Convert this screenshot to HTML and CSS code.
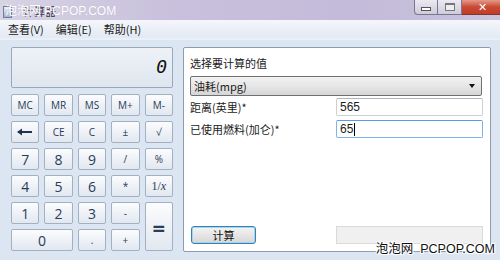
FILE: index.html
```html
<!DOCTYPE html>
<html lang="zh-CN">

<head>
  <meta charset="UTF-8">
  <title>计算器</title>
  <link rel="stylesheet" href="styles.css">
</head>

<body>
  <div class="window">
    <div class="titlebar">
      <span class="app-icon"></span>
      <span class="title">计算器</span>
      <div class="win-controls">
        <span class="win-btn win-min"><i></i></span>
        <span class="win-btn win-max"><i></i></span>
        <span class="win-btn win-close">✕</span>
      </div>
      <span class="mark mark--top">泡泡网 PCPOP.COM</span>
    </div>

    <div class="menubar">
      <span>查看(V)</span>
      <span>编辑(E)</span>
      <span>帮助(H)</span>
    </div>

    <div class="main">
      <div class="calc">
        <div class="display">0</div>
        <div class="keys">
          <button>MC</button>
          <button>MR</button>
          <button>MS</button>
          <button>M+</button>
          <button>M-</button>

          <button class="key-back">
            <svg width="16" height="8" viewBox="0 0 16 8">
              <path d="M1 4H15" stroke="#1f3350" stroke-width="2"/>
              <path d="M0 4L5 0.5V7.5Z" fill="#1f3350"/>
            </svg>
          </button>
          <button class="key-sm">CE</button>
          <button class="key-sm">C</button>
          <button class="key-sm">±</button>
          <button class="key-sm">√</button>

          <button class="key-num">7</button>
          <button class="key-num">8</button>
          <button class="key-num">9</button>
          <button class="key-sm">/</button>
          <button class="key-sm">%</button>

          <button class="key-num">4</button>
          <button class="key-num">5</button>
          <button class="key-num">6</button>
          <button class="key-sm">*</button>
          <button class="key-recip">1/<em>x</em></button>

          <button class="key-num">1</button>
          <button class="key-num">2</button>
          <button class="key-num">3</button>
          <button class="key-sm">-</button>
          <button class="key-eq">=</button>

          <button class="key-num key-zero">0</button>
          <button class="key-sm">.</button>
          <button class="key-sm">+</button>
        </div>
      </div>

      <div class="panel">
        <div class="panel__label">选择要计算的值</div>
        <div class="select">
          <span>油耗(mpg)</span>
          <span class="select__arrow"></span>
        </div>
        <div class="fields">
          <label>距离(英里)*</label>
          <div class="field">565</div>
          <label>已使用燃料(加仑)*</label>
          <div class="field field--focus">65<span class="caret"></span></div>
        </div>
        <div class="panel__foot">
          <button class="btn-calc">计算</button>
          <div class="result"></div>
        </div>
      </div>
    </div>

    <span class="mark mark--bottom">泡泡网&nbsp; PCPOP.COM</span>
  </div>
</body>

</html>
```

FILE: styles.css
```css
html,
body {
  margin: 0;
  height: 100%;
}

body {
  width: 500px;
  height: 260px;
  overflow: hidden;
  font-family: "Noto Sans CJK SC", "Liberation Sans", sans-serif;
  font-size: 11px;
  color: #1b1b1b;
}

.window {
  position: relative;
  height: 260px;
  background: #dce6f3;
}

/* 标题栏 */
.titlebar {
  position: relative;
  display: flex;
  align-items: center;
  height: 20px;
  background: linear-gradient(to right, #d7d3e3, #c8c0dc 35%, #c3bbd9 70%, #c9c3dc);
}

.app-icon {
  width: 7px;
  height: 10px;
  margin: 3px 0 0 3px;
  background: linear-gradient(#eef2f8, #9fb3cf);
  border: 1px solid #6d7f9c;
}

.title {
  margin: 2px 0 0 11px;
  font-size: 11px;
  color: #3a3848;
}

.win-controls {
  display: flex;
  align-self: flex-start;
  margin-left: auto;
  margin-right: -4px;
}

.win-btn {
  display: flex;
  align-items: center;
  justify-content: center;
  height: 14px;
  border: 1px solid #7a7690;
  border-top: none;
  background: linear-gradient(#ebe9f1, #cfcbdc);
}

.win-min {
  width: 22px;
  border-bottom-left-radius: 4px;
}

.win-min i {
  width: 8px;
  height: 2px;
  margin-top: 4px;
  background: #fff;
  border: 1px solid #555;
}

.win-max {
  width: 23px;
  border-left: none;
}

.win-max i {
  width: 8px;
  height: 5px;
  border: 1px solid #777;
  border-top-width: 2px;
  background: #eee;
}

.win-close {
  width: 41px;
  border-left: none;
  border-color: #7a3a33;
  border-bottom-right-radius: 4px;
  background: linear-gradient(#e49a8a, #c94a35 50%, #c23b24);
  color: #fff;
  font-weight: bold;
  font-size: 11px;
  font-family: "DejaVu Sans", sans-serif;
}

/* 水印 */
.mark {
  position: absolute;
  font-family: "Liberation Sans", "Noto Sans CJK SC", sans-serif;
  font-size: 12px;
  line-height: 14px;
  white-space: nowrap;
}

.mark--top {
  left: 5px;
  top: 4px;
  color: #fff;
  text-shadow: 0 0 1px #b8b0cc;
}

.mark--bottom {
  right: 5px;
  bottom: 4px;
  font-size: 12.5px;
  color: #111;
  text-shadow: 1px 1px 0 #fff, -1px -1px 0 #fff, 1px -1px 0 #fff, -1px 1px 0 #fff;
}

/* 菜单栏 */
.menubar {
  display: flex;
  gap: 12px;
  height: 18px;
  padding-left: 8px;
  align-items: center;
  background: linear-gradient(#f4f6fa, #e3e9f3);
  border-bottom: 2px solid #eaf0f8;
  color: #1a1a1a;
}

/* 主体 */
.main {
  display: flex;
  gap: 10px;
  padding: 7px 0 0 11px;
}

.calc {
  width: 162px;
}

.display {
  height: 39px;
  border: 1px solid #9aa8bb;
  border-radius: 2px;
  background: linear-gradient(#eef2f7, #dfe6ef);
  text-align: right;
  padding-right: 5px;
  font-family: "DejaVu Sans Mono", monospace;
  font-style: italic;
  font-size: 18px;
  line-height: 38px;
  color: #111;
}

.keys {
  display: grid;
  grid-template-columns: repeat(5, 1fr);
  grid-auto-rows: 22px;
  gap: 5px 5px;
  margin-top: 6px;
}

.keys button {
  display: flex;
  align-items: center;
  justify-content: center;
  padding: 0;
  border: 1px solid #a3b0c2;
  border-radius: 2px;
  background: linear-gradient(#fbfcfd, #eef2f7 50%, #e2e8f0);
  font-family: "Open Sans", "Liberation Sans", sans-serif;
  font-size: 10px;
  color: #2a3c58;
}

.keys .key-num {
  font-size: 14px;
}

.keys .key-recip {
  font-family: "Liberation Serif", serif;
  font-size: 12px;
}

.keys .key-zero {
  grid-column: span 2;
}

.keys .key-eq {
  grid-row: span 2;
  font-size: 22px;
  font-weight: bold;
}

/* 右侧面板 */
.panel {
  display: flex;
  flex-direction: column;
  width: 300px;
  height: 189px;
  padding: 7px 0 7px 6px;
  background: #fff;
  border: 1px solid #8f9bae;
  border-radius: 2px;
}

.panel__label {
  line-height: 14px;
  margin-top: 1px;
}

.select {
  display: flex;
  align-items: center;
  width: 287px;
  height: 18px;
  margin-top: 6px;
  padding-left: 3px;
  border: 1px solid #707070;
  border-radius: 2px;
  background: linear-gradient(#f3f3f3, #e6e6e6 50%, #d6d6d6);
}

.select__arrow {
  margin-left: auto;
  margin-right: 6px;
  border: 3px solid transparent;
  border-top: 4px solid #111;
  border-bottom: 0;
}

.fields {
  display: grid;
  grid-template-columns: 146px 147px;
  grid-auto-rows: 18px;
  row-gap: 4px;
  margin-top: 2px;
  align-items: center;
}

.field {
  display: flex;
  align-items: center;
  height: 16px;
  padding-left: 3px;
  border: 1px solid #cbd0d8;
  border-top-color: #aeb4bd;
  border-radius: 2px;
  font-family: "Liberation Sans", sans-serif;
  font-size: 12px;
}

.field--focus {
  border-color: #7eb4ea;
  border-top-color: #569de5;
}

.caret {
  width: 1px;
  height: 13px;
  margin-left: 1px;
  background: #000;
}

.panel__foot {
  display: flex;
  justify-content: space-between;
  margin-top: auto;
  padding-right: 7px;
}

.btn-calc {
  width: 65px;
  height: 18px;
  margin-left: 1px;
  padding: 0;
  border: 1px solid #3c7fb1;
  border-radius: 3px;
  box-shadow: inset 0 0 0 1px #9fd6f0;
  background: linear-gradient(#f4f4f4, #e6e6e6 50%, #d6d6d6);
  font-family: inherit;
  font-size: 11px;
  color: #111;
}

.result {
  width: 145px;
  height: 16px;
  border: 1px solid #dadada;
  background: #f0f0f0;
}
```
